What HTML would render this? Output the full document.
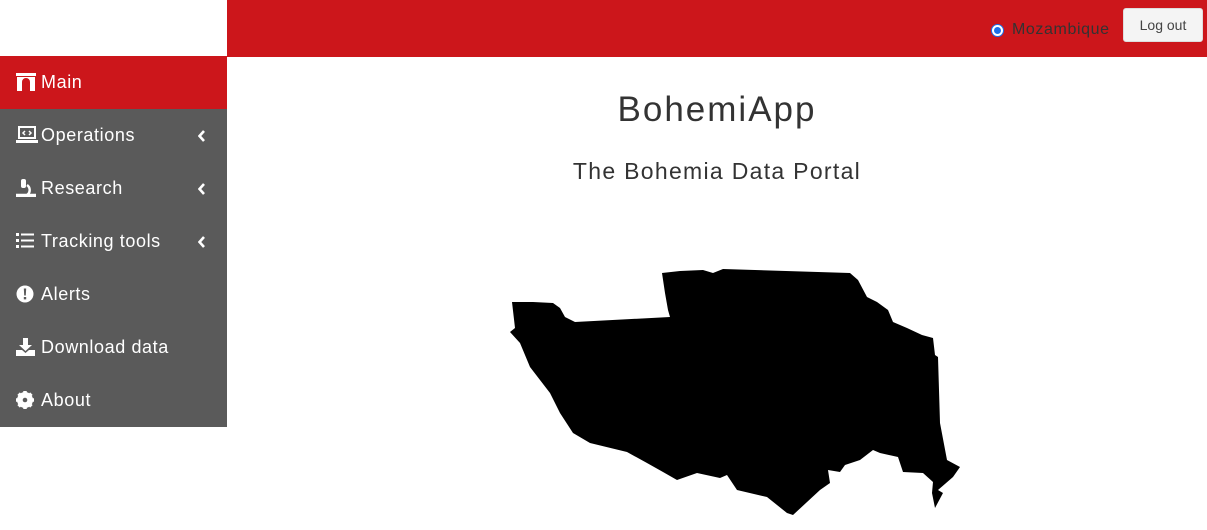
<!DOCTYPE html>
<html><head><style>
*{margin:0;padding:0;box-sizing:border-box}
body{width:1207px;height:530px;overflow:hidden;background:#fff;font-family:"Liberation Sans",sans-serif;position:relative}
.top{position:absolute;left:227px;top:0;width:980px;height:57px;background:#cc161b}
.side{position:absolute;left:0;top:56px;width:227px;height:371px;background:#5a5a5a}
.item{position:absolute;left:0;width:227px;height:53px;color:#fff;font-size:18px;line-height:53px;letter-spacing:0.6px}
.item svg{position:absolute;left:16px;top:17px}
.item span{position:absolute;left:41px}
.item svg.ch{left:198px;top:21px}
.main{background:#cc161b}
h1{position:absolute;left:0;right:0;margin-left:227px;top:90px;text-align:center;font-weight:normal;font-size:35px;color:#333;letter-spacing:2px}
h2{position:absolute;left:0;right:0;margin-left:227px;top:158px;text-align:center;font-weight:normal;font-size:23px;color:#333;letter-spacing:1.3px}
.rad{position:absolute;left:991px;top:24px;width:13px;height:13px;border-radius:50%;background:#fff;border:1px solid #1a6fe8}
.rad:after{content:"";position:absolute;left:2px;top:2px;width:7px;height:7px;border-radius:50%;background:#1a6fe8}
.moz{position:absolute;left:1012px;top:21px;font-size:16px;color:#333;letter-spacing:0.6px}
.btn{position:absolute;left:1123px;top:8px;width:80px;height:34px;background:#f4f4f4;border:1px solid #ddd;border-radius:3px;font-size:14px;color:#444;text-align:center;line-height:32px}
</style></head><body>
<div class="top"></div>
<div class="rad"></div><div class="moz">Mozambique</div>
<div class="btn">Log out</div>
<div class="side">
<div class="item main" style="top:0"><svg width="20" height="18" viewBox="0 0 20 18"><path d="M0 0h20v3H0zM1 4h18v14h-5V9a4 4 0 0 0-8 0v9H1z" fill="#fff"/></svg><span>Main</span></div>
<div class="item" style="top:53px"><svg width="22" height="18" viewBox="0 0 22 18"><rect x="3" y="1" width="16" height="11" fill="none" stroke="#fff" stroke-width="2"/><path d="M0 14h22v3H0z" fill="#fff"/><path d="M9 5l-2 2 2 2M13 5l2 2-2 2" stroke="#fff" fill="none" stroke-width="1.5"/></svg><span>Operations</span><svg class="ch" width="8" height="12" viewBox="0 0 8 12"><path d="M6 1L1.5 6 6 11" stroke="#fff" stroke-width="2.6" fill="none"/></svg></div>
<div class="item" style="top:106px"><svg width="20" height="18" viewBox="0 0 20 18"><rect x="5" y="0" width="5" height="9" rx="2" fill="#fff"/><path d="M11 6a6 6 0 0 1 0 10H3M1 16h18v2H1z" stroke="#fff" stroke-width="2.5" fill="none"/></svg><span>Research</span><svg class="ch" width="8" height="12" viewBox="0 0 8 12"><path d="M6 1L1.5 6 6 11" stroke="#fff" stroke-width="2.6" fill="none"/></svg></div>
<div class="item" style="top:159px"><svg width="20" height="18" viewBox="0 0 20 18"><path d="M0 1h3v3H0zM0 7h3v3H0zM0 13h3v3H0zM5 1.5h13v2H5zM5 7.5h13v2H5zM5 13.5h13v2H5z" fill="#fff"/></svg><span>Tracking tools</span><svg class="ch" width="8" height="12" viewBox="0 0 8 12"><path d="M6 1L1.5 6 6 11" stroke="#fff" stroke-width="2.6" fill="none"/></svg></div>
<div class="item" style="top:212px"><svg width="18" height="18" viewBox="0 0 18 18"><circle cx="9" cy="9" r="8.5" fill="#fff"/><path d="M7.8 3.5h2.4l-.4 7H8.2zM7.8 12h2.4v2.4H7.8z" fill="#5a5a5a"/></svg><span>Alerts</span></div>
<div class="item" style="top:265px"><svg width="20" height="18" viewBox="0 0 20 18"><path d="M7 0h5v7h4l-6.5 6L3 7h4zM0 12h6l3.5 3 3.5-3h6v6H0z" fill="#fff"/></svg><span>Download data</span></div>
<div class="item" style="top:318px"><svg width="18" height="18" viewBox="0 0 18 18"><circle cx="9" cy="9" r="6" fill="none" stroke="#fff" stroke-width="4"/><g stroke="#fff" stroke-width="3.5"><path d="M9 0v18M0 9h18M2.6 2.6l12.8 12.8M15.4 2.6L2.6 15.4"/></g><circle cx="9" cy="9" r="2.3" fill="#5a5a5a"/></svg><span>About</span></div>
</div>
<h1>BohemiApp</h1>
<h2>The Bohemia Data Portal</h2>
<svg style="position:absolute;left:0;top:0" width="1207" height="530"><polygon fill="#000" points="512,302 533,302 553,303 560,308 565,317 575,322 670,317 668,310 665,293 662,273 680,271 703,270 713,273 723,269 850,273 858,280 867,297 877,302 888,310 893,322 907,328 922,335 933,338 935,355 938,357 940,423 947,460 960,467 953,477 938,490 943,493 935,508 932,493 933,482 923,473 903,472 898,457 880,453 873,450 860,460 845,465 840,472 828,470 830,483 820,490 793,515 787,513 767,497 737,490 727,475 720,478 697,473 677,480 663,472 647,463 627,452 590,443 573,433 560,413 550,393 530,367 520,343 510,332 515,328 512,302"/></svg>
</body></html>
